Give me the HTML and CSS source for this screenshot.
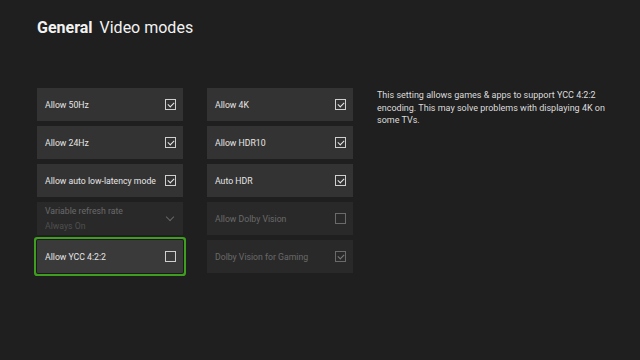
FILE: index.html
```html
<!DOCTYPE html>
<html lang="en">

<head>
    <meta charset="UTF-8">
    <meta name="viewport" content="width=device-width, initial-scale=1.0">
    <title>Video modes</title>
    <link rel="stylesheet" href="styles.css">
</head>

<body>

    <!-- Header -->
    <div class="header">
        <span class="section">General</span>
        <span class="page">Video modes</span>
    </div>

    <!-- Settings -->
    <div class="layout">
        <div class="column">
            <div class="tile">
                <span class="label">Allow 50Hz</span>
                <span class="check on"></span>
            </div>
            <div class="tile">
                <span class="label">Allow 24Hz</span>
                <span class="check on"></span>
            </div>
            <div class="tile">
                <span class="label">Allow auto low-latency mode</span>
                <span class="check on"></span>
            </div>
            <div class="tile disabled">
                <span class="label">Variable refresh rate<small>Always On</small></span>
                <span class="chevron"></span>
            </div>
            <div class="tile focus">
                <span class="label">Allow YCC 4:2:2</span>
                <span class="check"></span>
            </div>
        </div>

        <div class="column">
            <div class="tile">
                <span class="label">Allow 4K</span>
                <span class="check on"></span>
            </div>
            <div class="tile">
                <span class="label">Allow HDR10</span>
                <span class="check on"></span>
            </div>
            <div class="tile">
                <span class="label">Auto HDR</span>
                <span class="check on"></span>
            </div>
            <div class="tile disabled">
                <span class="label">Allow Dolby Vision</span>
                <span class="check"></span>
            </div>
            <div class="tile disabled">
                <span class="label">Dolby Vision for Gaming</span>
                <span class="check on"></span>
            </div>
        </div>

        <p class="description">This setting allows games &amp; apps to support YCC 4:2:2 encoding. This may solve problems with displaying 4K on some TVs.</p>
    </div>

</body>

</html>
```

FILE: styles.css
```css
body {
    margin: 0;
    font-family: Roboto, sans-serif;
    background: #1f1f1f;
    color: #e8e8e8;
    width: 640px;
    height: 360px;
    overflow: hidden;
}

/* Header */
.header {
    padding: 17px 0 0 37px;
    height: 88px;
    box-sizing: border-box;
    font-size: 16px;
    line-height: 22px;
    color: #f2f2f2;
}

.header .section {
    font-weight: bold;
    margin-right: 3px;
}

/* Layout */
.layout {
    display: flex;
    gap: 24px;
    padding-left: 37px;
}

.column {
    width: 146px;
    display: flex;
    flex-direction: column;
    gap: 5px;
}

.tile {
    height: 33px;
    background: #333333;
    display: flex;
    align-items: center;
    justify-content: space-between;
    padding: 0 7px 0 8px;
    font-size: 8.7px;
    color: #e6e6e6;
}

.tile .label {
    display: flex;
    flex-direction: column;
    white-space: nowrap;
}

.tile small {
    font-size: 8.7px;
    color: #4f4f4f;
    margin-top: 5px;
}

.tile.disabled {
    background: #292929;
    color: #6a6a6a;
}

.tile.focus {
    background: #3a3a3a;
    box-shadow: 0 0 0 1px #1b1b1b, 0 0 0 3px #3f9d20;
    border-radius: 1px;
}

/* Checkbox */
.check {
    width: 9px;
    height: 9px;
    border: 1px solid #cfcfcf;
    position: relative;
    flex-shrink: 0;
}

.disabled .check {
    border-color: #6a6a6a;
}

.check.on::after {
    content: "";
    position: absolute;
    left: 2px;
    top: 1px;
    width: 5px;
    height: 3px;
    border-left: 1px solid #e6e6e6;
    border-bottom: 1px solid #e6e6e6;
    transform: translate(0, 1px) rotate(-45deg);
}

.disabled .check.on::after {
    border-color: #7a7a7a;
}

.chevron {
    width: 5px;
    height: 5px;
    border-right: 1px solid #666;
    border-bottom: 1px solid #666;
    transform: rotate(45deg);
    margin: -4px 3px 0 0;
}

.description {
    margin: 0;
    width: 238px;
    font-size: 9px;
    line-height: 12.5px;
    color: #dcdcdc;
    padding-top: 1px;
}
```
